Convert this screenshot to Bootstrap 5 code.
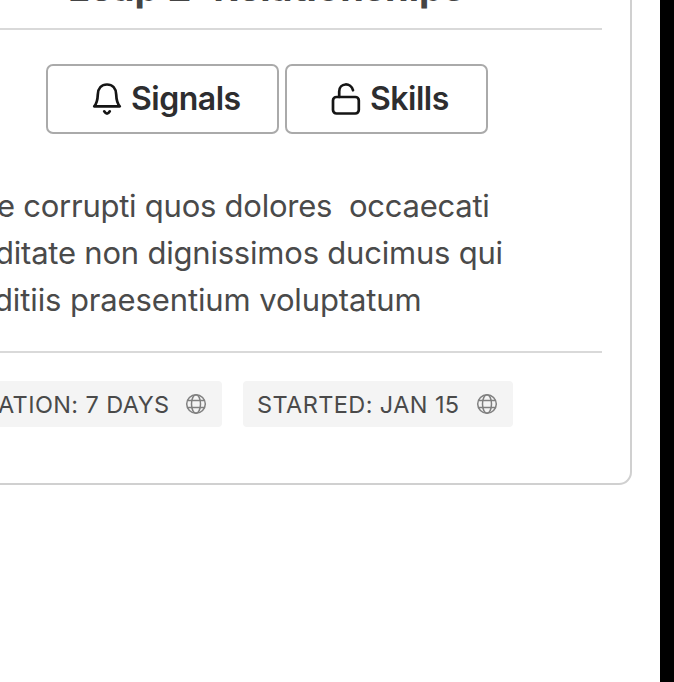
<!DOCTYPE html>
<html lang="en">
<head>
<meta charset="utf-8">
<meta name="viewport" content="width=device-width, initial-scale=1">
<title>Leap 2: Relationships</title>
<link rel="stylesheet" href="https://cdn.jsdelivr.net/npm/bootstrap@5.3.0/dist/css/bootstrap.min.css">
<style>
body{font-family:Inter,"Liberation Sans",sans-serif;background:#fff;color:#4a4a4a}
.stage{height:682px;border-right:14px solid #000}
.leap-card{width:660px;height:515px;margin:-30px 0 0 -28px;border:2px solid #d0d0d0;border-radius:13px;padding:0 28px 0 26px}
.leap-title{height:56px;padding-left:68px;font-size:38px;line-height:30px;font-weight:700;color:#444;white-space:nowrap}
.rule{height:2px;background:#d9d9d9}
.actions{padding:34px 0 0 46px;gap:6px}
.btn-leap{height:70px;border:2px solid #aaa;border-radius:7px;font-size:32px;font-weight:600;color:#2d2d2f;line-height:1;padding:0 0 0 43px;gap:8px;letter-spacing:-.5px;white-space:nowrap}
.btn-signals{width:233px}
.btn-skills{width:203px}
.btn-leap svg{width:32px;height:36px;flex:none;color:#151515}
.copy{padding-top:48px;height:217px;font-size:31px;line-height:47px}
.copy span{display:block;white-space:pre}
.line-one{margin-left:-3px;letter-spacing:-.25px}
.line-two{margin-left:-5px;letter-spacing:-.21px}
.line-three{margin-left:-6px;letter-spacing:-.12px}
.tags{padding-top:28px;gap:21px}
.tag{height:46px;background:#f4f4f4;border-radius:4px;font-size:23.5px;letter-spacing:.4px;line-height:46px;white-space:pre}
.tag span{padding-top:1px}
.tag svg{width:22px;height:22px;flex:none;color:#808080}
.tag-duration{width:232px;margin-left:-10px;padding:0 15px 0 8px}
.tag-started{width:270px;padding:0 15px 0 14px}
</style>
</head>
<body class="overflow-hidden">
<main class="stage overflow-hidden">
<section class="card leap-card bg-white">
  <h1 class="leap-title m-0"><span>Leap 2: Relationships</span></h1>
  <div class="rule"></div>
  <div class="actions d-flex">
    <button class="btn btn-leap btn-signals d-flex align-items-center" type="button">
      <svg viewBox="0 0 32 36" fill="none" stroke="currentColor" stroke-width="2.7" stroke-linejoin="round" stroke-linecap="round"><path d="M3.2 25.3C6.3 22 6.600 19 6.800 13.500C7 7.500 10.500 3.500 16 3.500S25 7.500 25.200 13.500C25.400 19 25.700 22 28.800 25.300Z"/><path d="M13.200 30.300Q16 34.800 18.800 30.300"/></svg>
      <span>Signals</span>
    </button>
    <button class="btn btn-leap btn-skills d-flex align-items-center" type="button">
      <svg viewBox="0 0 32 36" fill="none" stroke="currentColor" stroke-width="2.7" stroke-linecap="round"><rect x="3" y="16" width="25.800" height="16.500" rx="3.500"/><path d="M9.200 16V10.500C9.200 1.500 21.200 1.200 23 9.300"/></svg>
      <span>Skills</span>
    </button>
  </div>
  <div class="copy"><span class="line-one">e corrupti quos dolores  occaecati</span><span class="line-two">ditate non dignissimos ducimus qui</span><span class="line-three">ditiis praesentium voluptatum</span></div>
  <div class="rule"></div>
  <div class="tags d-flex">
    <div class="tag tag-duration d-flex align-items-center justify-content-between"><span>ATION: 7 DAYS</span><svg viewBox="0 0 22 22" fill="none" stroke="currentColor" stroke-width="1.500"><circle cx="11" cy="11" r="9.300"/><ellipse cx="11" cy="11" rx="4.500" ry="9.300"/><path d="M2.500 7.500H19.500M2.500 14.500H19.500"/></svg></div>
    <div class="tag tag-started d-flex align-items-center justify-content-between"><span>STARTED: JAN 15</span><svg viewBox="0 0 22 22" fill="none" stroke="currentColor" stroke-width="1.500"><circle cx="11" cy="11" r="9.300"/><ellipse cx="11" cy="11" rx="4.500" ry="9.300"/><path d="M2.500 7.500H19.500M2.500 14.500H19.500"/></svg></div>
  </div>
</section>
</main>
<script src="https://cdn.jsdelivr.net/npm/bootstrap@5.3.0/dist/js/bootstrap.bundle.min.js"></script>
</body>
</html>
